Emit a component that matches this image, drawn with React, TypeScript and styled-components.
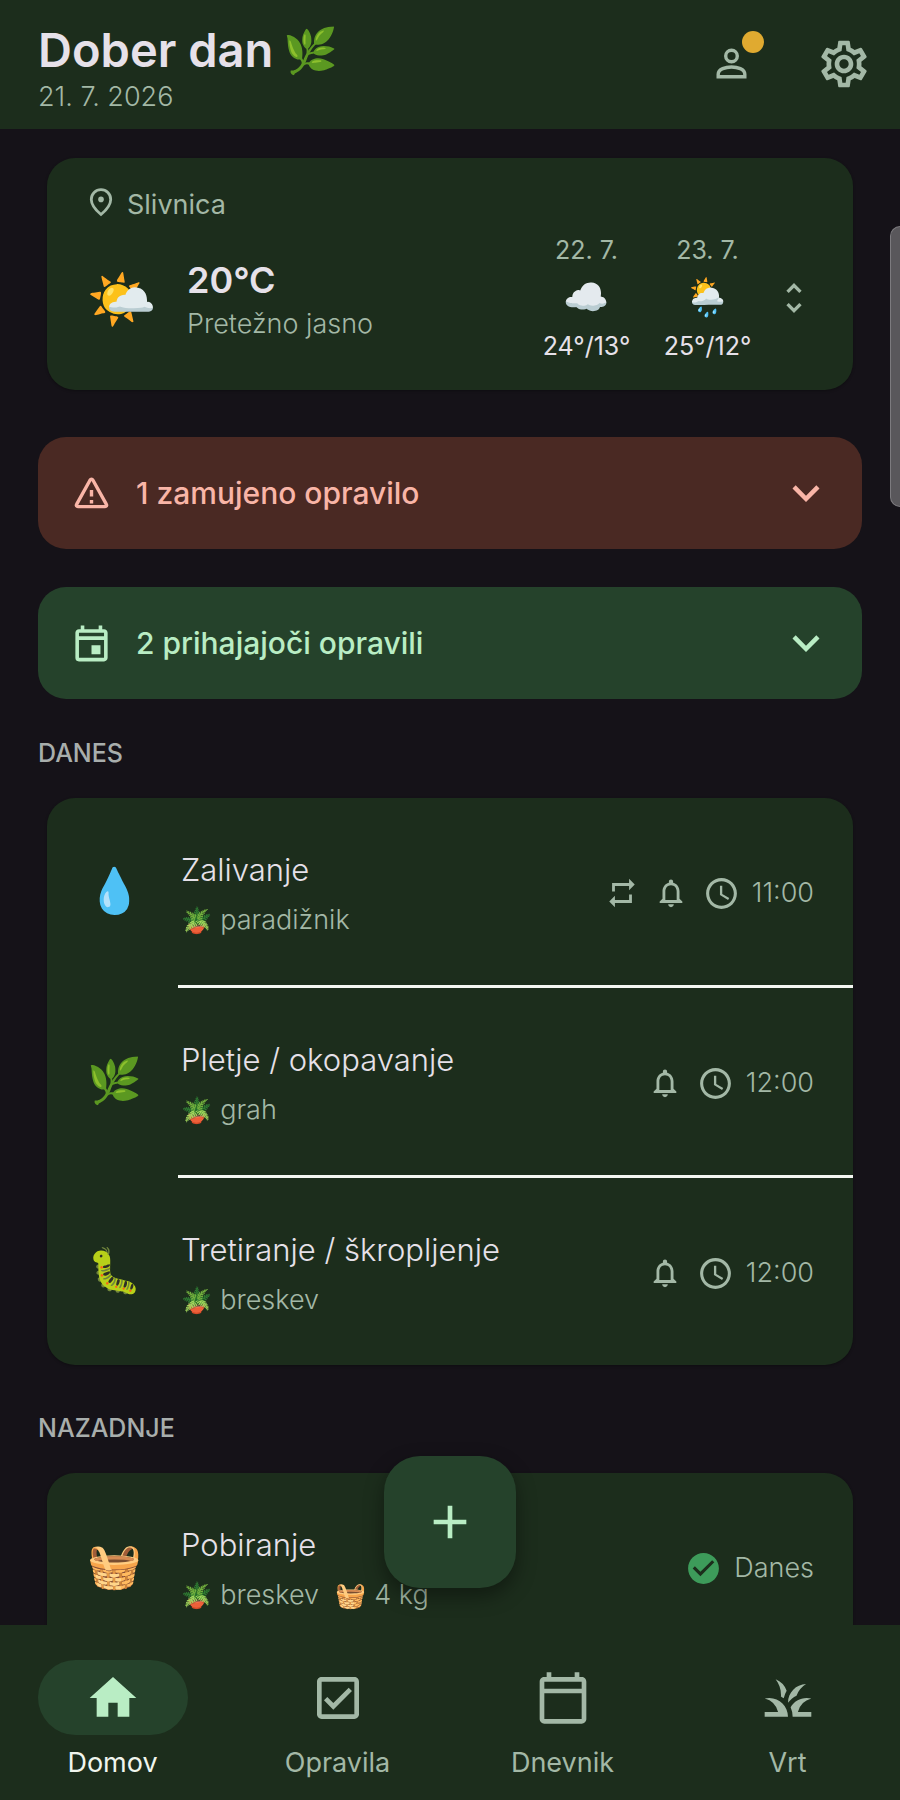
import { useState } from 'react';
import styled, { createGlobalStyle } from 'styled-components';
import {
	MdAccessTime,
	MdAdd,
	MdCheckCircle,
	MdExpandMore,
	MdGrass,
	MdHome,
	MdNotificationsNone,
	MdOutlineCalendarToday,
	MdOutlineCheckBox,
	MdOutlineEvent,
	MdOutlineSettings,
	MdRepeat,
	MdUnfoldMore,
} from 'react-icons/md';

interface TaskType {
	id: string;
	emoji: string;
	title: string;
	plant: string;
	harvest?: string;
	time?: string;
	done?: string;
	repeats?: boolean;
}

const todayTasks: TaskType[] = [
	{ id: 'watering', emoji: '💧', title: 'Zalivanje', plant: 'paradižnik', time: '11:00', repeats: true },
	{ id: 'weeding', emoji: '🌿', title: 'Pletje / okopavanje', plant: 'grah', time: '12:00' },
	{ id: 'spraying', emoji: '🐛', title: 'Tretiranje / škropljenje', plant: 'breskev', time: '12:00' },
];

const recentTasks: TaskType[] = [
	{ id: 'harvest', emoji: '🧺', title: 'Pobiranje', plant: 'breskev', harvest: '4 kg', done: 'Danes' },
];

const forecast = [
	{ date: '22. 7.', emoji: '☁️', temps: '24°/13°' },
	{ date: '23. 7.', emoji: '🌦️', temps: '25°/12°' },
];

const tabs = [
	{ id: 'home', label: 'Domov', Icon: MdHome },
	{ id: 'tasks', label: 'Opravila', Icon: MdOutlineCheckBox },
	{ id: 'diary', label: 'Dnevnik', Icon: MdOutlineCalendarToday },
	{ id: 'garden', label: 'Vrt', Icon: MdGrass },
];

const colors = {
	background: '#151218',
	surface: '#1c2d1c',
	container: '#25422b',
	onContainer: '#b9edc4',
	error: '#4a2923',
	onError: '#f9b5a7',
	text: '#e6e1e9',
	muted: '#a3b8a6',
};

const GlobalStyle = createGlobalStyle`
	* {
		box-sizing: border-box;
	}

	body {
		margin: 0;
		background: ${colors.background};
		color: ${colors.text};
		font-family: Inter, 'Noto Color Emoji', sans-serif;
		font-size: 27px;
		font-weight: 300;
		line-height: 36px;
	}

	button {
		padding: 0;
		border: 0;
		background: none;
		color: inherit;
		font: inherit;
		cursor: pointer;
	}

	svg {
		display: block;
		flex: none;
	}
`;

const Page = styled.div`
	position: relative;
	display: flex;
	flex-direction: column;
	height: 100vh;
`;

const Header = styled.header`
	display: flex;
	align-items: flex-start;
	justify-content: space-between;
	padding: 20px 0 14px 38px;
	background: ${colors.surface};
	color: ${colors.muted};
`;

const Title = styled.h1`
	display: flex;
	align-items: center;
	gap: 10px;
	margin: 0;
	color: ${colors.text};
	font-size: 47px;
	font-weight: 600;
	line-height: 59px;
`;

const HeaderActions = styled.div`
	display: flex;
`;

const IconButton = styled.button`
	position: relative;
	display: flex;
	align-items: center;
	justify-content: center;
	width: 112px;
	height: 88px;
`;

const Badge = styled.span`
	position: absolute;
	top: 11px;
	right: 24px;
	width: 22px;
	height: 22px;
	border-radius: 50%;
	background: #e0aa30;
`;

const Emoji = styled.span<{ $size: number; $width?: number }>`
	display: flex;
	flex: none;
	align-items: center;
	justify-content: center;
	width: ${({ $width }) => ($width ? `${$width}px` : 'auto')};
	font-size: ${({ $size }) => $size}px;
	font-weight: 400;
	line-height: 1;
`;

const Content = styled.main`
	flex: 1;
	min-height: 0;
	padding: 20px 38px 120px;
	overflow-y: auto;
	scrollbar-width: none;
`;

const Card = styled.section`
	margin: 9px;
	border-radius: 28px;
	background: ${colors.surface};
	box-shadow: 0 1px 3px rgba(0, 0, 0, 0.3);
`;

const WeatherCard = styled(Card)`
	padding: 28px 39px 26px;
`;

const Location = styled.div`
	display: flex;
	align-items: center;
	gap: 11px;
	margin-bottom: 8px;
	color: ${colors.muted};
	font-weight: 400;
	line-height: 38px;
`;

const WeatherRow = styled.div`
	display: flex;
	align-items: center;
`;

const Current = styled.div`
	flex: 1;
	margin-left: 29px;
	padding-top: 4px;
	color: ${colors.muted};
	line-height: 40px;
`;

const Temperature = styled.div`
	color: ${colors.text};
	font-size: 36px;
	font-weight: 600;
	line-height: 48px;
`;

const ForecastList = styled.div`
	display: flex;
	gap: 30px;
	margin-right: 21px;
`;

const ForecastDay = styled.div`
	display: flex;
	flex-direction: column;
	align-items: center;
	min-width: 91px;
	font-size: 25px;
	font-weight: 400;
`;

const ForecastDate = styled.span`
	color: ${colors.muted};
`;

const ForecastIcon = styled.div`
	display: flex;
	align-items: center;
	height: 60px;
	padding-bottom: 4px;
`;

const ExpandButton = styled.button`
	color: ${colors.muted};
`;

const Alerts = styled.div`
	display: flex;
	flex-direction: column;
	gap: 38px;
	margin-top: 47px;
`;

const Alert = styled.button<{ $error?: boolean }>`
	display: flex;
	align-items: center;
	min-height: 112px;
	padding: 0 29px 0 32px;
	border-radius: 28px;
	background: ${({ $error }) => ($error ? colors.error : colors.container)};
	color: ${({ $error }) => ($error ? colors.onError : colors.onContainer)};
	font-size: 30px;
	font-weight: 500;
	text-align: left;
`;

const AlertText = styled.span`
	flex: 1;
	margin-left: 23px;
`;

const SectionTitle = styled.h2`
	margin: 0;
	padding: 36px 0 18px;
	color: #a8aeac;
	font-size: 25px;
	font-weight: 500;
	line-height: 36px;
	text-transform: uppercase;
`;

const Divider = styled.hr`
	height: 3px;
	margin: 0 0 0 131px;
	border: 0;
	background: #f4f7f2;
`;

const Row = styled.div`
	display: flex;
	align-items: center;
	padding: 50px 39px 47px;
`;

const RowEmoji = styled(Emoji)`
	padding-bottom: 6px;
`;

const RowBody = styled.div`
	display: flex;
	flex: 1;
	flex-direction: column;
	gap: 10px;
	margin-left: 38px;
`;

const RowTitle = styled.div`
	font-size: 31px;
	line-height: 44px;
`;

const RowDetails = styled.div`
	display: flex;
	gap: 16px;
	color: ${colors.muted};
`;

const Detail = styled.span`
	display: flex;
	align-items: center;
	gap: 8px;
`;

const RowMeta = styled.div`
	display: flex;
	align-items: center;
	gap: 15px;
	color: ${colors.muted};
`;

const MetaText = styled.span`
	display: flex;
	align-items: center;
	gap: 12px;
`;

const Fab = styled.button`
	position: absolute;
	bottom: 212px;
	left: 50%;
	display: flex;
	align-items: center;
	justify-content: center;
	width: 132px;
	height: 132px;
	margin-left: -66px;
	border-radius: 36px;
	background: ${colors.container};
	box-shadow: 0 8px 20px rgba(0, 0, 0, 0.4);
	color: ${colors.onContainer};
`;

const ScrollThumb = styled.div`
	position: absolute;
	top: 226px;
	right: 0;
	width: 10px;
	height: 281px;
	border: 1px solid #7c7a7e;
	border-right: 0;
	border-radius: 10px 0 0 10px;
	background: #59575b;
`;

const TabBar = styled.nav`
	display: grid;
	grid-template-columns: repeat(4, 1fr);
	padding: 35px 0 19px;
	background: ${colors.surface};
`;

const Tab = styled.button<{ $active: boolean }>`
	display: flex;
	flex-direction: column;
	align-items: center;
	gap: 10px;
	color: ${({ $active }) => ($active ? '#f0f5ee' : colors.muted)};
	font-weight: 400;
`;

const TabIcon = styled.span<{ $active: boolean }>`
	display: flex;
	align-items: center;
	justify-content: center;
	width: 150px;
	height: 75px;
	border-radius: 38px;
	background: ${({ $active }) => ($active ? colors.container : 'transparent')};
	color: ${({ $active }) => ($active ? colors.onContainer : colors.muted)};
`;

const PersonIcon = () => (
	<svg width="46" height="46" viewBox="0 0 46 46" fill="none" stroke="currentColor" strokeWidth="3.4" aria-hidden="true">
		<circle cx="22.500" cy="15" r="5.8" />
		<path d="M9.200 35.800v-2.600c0-5.200 7.600-7.200 13.300-7.200s13.300 2 13.300 7.200v2.600z" />
	</svg>
);

const PinIcon = () => (
	<svg width="30" height="36" viewBox="0 0 30 36" fill="none" aria-hidden="true">
		<path
			d="M15 27.500C8.500 22 5.300 17.200 5.300 12.400a9.700 9.700 0 0 1 19.400 0c0 4.800-3.200 9.600-9.700 15.100z"
			stroke="currentColor"
			strokeWidth="2.8"
		/>
		<circle cx="15" cy="12.400" r="2.800" fill="currentColor" />
	</svg>
);

const WarningIcon = () => (
	<svg
		width="43"
		height="43"
		viewBox="0 0 43 43"
		fill="none"
		stroke="currentColor"
		strokeWidth="3.4"
		strokeLinejoin="round"
		aria-hidden="true"
	>
		<path d="M20 8.200 6.600 32.400c-.7 1.200 0 2.200 1.300 2.200h27.200c1.300 0 2-1 1.300-2.200L23 8.200c-.8-1.400-2.200-1.400-3 0z" />
		<path d="M21.500 18v6.500M21.500 28v3.400" />
	</svg>
);

function TaskRow({ task }: { task: TaskType }) {
	return (
		<Row>
			<RowEmoji $size={44} $width={57}>{task.emoji}</RowEmoji>
			<RowBody>
				<RowTitle>{task.title}</RowTitle>
				<RowDetails>
					<Detail>
						<Emoji $size={25}>🪴</Emoji>
						{task.plant}
					</Detail>
					{task.harvest && (
						<Detail>
							<Emoji $size={25}>🧺</Emoji>
							{task.harvest}
						</Detail>
					)}
				</RowDetails>
			</RowBody>
			<RowMeta>
				{task.repeats && <MdRepeat size={34} />}
				{task.time && (
					<>
						<MdNotificationsNone size={34} />
						<MetaText>
							<MdAccessTime size={37} />
							{task.time}
						</MetaText>
					</>
				)}
				{task.done && (
					<MetaText>
						<MdCheckCircle size={37} color="#3d9b5a" />
						{task.done}
					</MetaText>
				)}
			</RowMeta>
		</Row>
	);
}

function TaskCard({ tasks }: { tasks: TaskType[] }) {
	return (
		<Card>
			{tasks.map((task, index) => (
				<div key={task.id}>
					{index > 0 && <Divider />}
					<TaskRow task={task} />
				</div>
			))}
		</Card>
	);
}

function App() {
	const [activeTab, setActiveTab] = useState('home');

	return (
		<Page>
			<GlobalStyle />
			<Header>
				<div>
					<Title>
						Dober dan <Emoji $size={44}>🌿</Emoji>
					</Title>
					<div>21. 7. 2026</div>
				</div>
				<HeaderActions>
					<IconButton aria-label="Profil">
						<PersonIcon />
						<Badge />
					</IconButton>
					<IconButton aria-label="Nastavitve">
						<MdOutlineSettings size={56} />
					</IconButton>
				</HeaderActions>
			</Header>

			<Content>
				<WeatherCard>
					<Location>
						<PinIcon />
						Slivnica
					</Location>
					<WeatherRow>
						<Emoji $size={57} $width={72}>🌤️</Emoji>
						<Current>
							<Temperature>20°C</Temperature>
							<div>Pretežno jasno</div>
						</Current>
						<ForecastList>
							{forecast.map((day) => (
								<ForecastDay key={day.date}>
									<ForecastDate>{day.date}</ForecastDate>
									<ForecastIcon>
										<Emoji $size={37}>{day.emoji}</Emoji>
									</ForecastIcon>
									<span>{day.temps}</span>
								</ForecastDay>
							))}
						</ForecastList>
						<ExpandButton aria-label="Razširi napoved">
							<MdUnfoldMore size={40} />
						</ExpandButton>
					</WeatherRow>
				</WeatherCard>

				<Alerts>
					<Alert $error>
						<WarningIcon />
						<AlertText>1 zamujeno opravilo</AlertText>
						<MdExpandMore size={54} />
					</Alert>
					<Alert>
						<MdOutlineEvent size={43} />
						<AlertText>2 prihajajoči opravili</AlertText>
						<MdExpandMore size={54} />
					</Alert>
				</Alerts>

				<SectionTitle>Danes</SectionTitle>
				<TaskCard tasks={todayTasks} />
				<SectionTitle>Nazadnje</SectionTitle>
				<TaskCard tasks={recentTasks} />
			</Content>

			<TabBar>
				{tabs.map(({ id, label, Icon }) => (
					<Tab key={id} $active={id === activeTab} onClick={() => setActiveTab(id)}>
						<TabIcon $active={id === activeTab}>
							<Icon size={56} />
						</TabIcon>
						{label}
					</Tab>
				))}
			</TabBar>

			<ScrollThumb />
			<Fab aria-label="Dodaj opravilo">
				<MdAdd size={56} />
			</Fab>
		</Page>
	);
}

export default App;
